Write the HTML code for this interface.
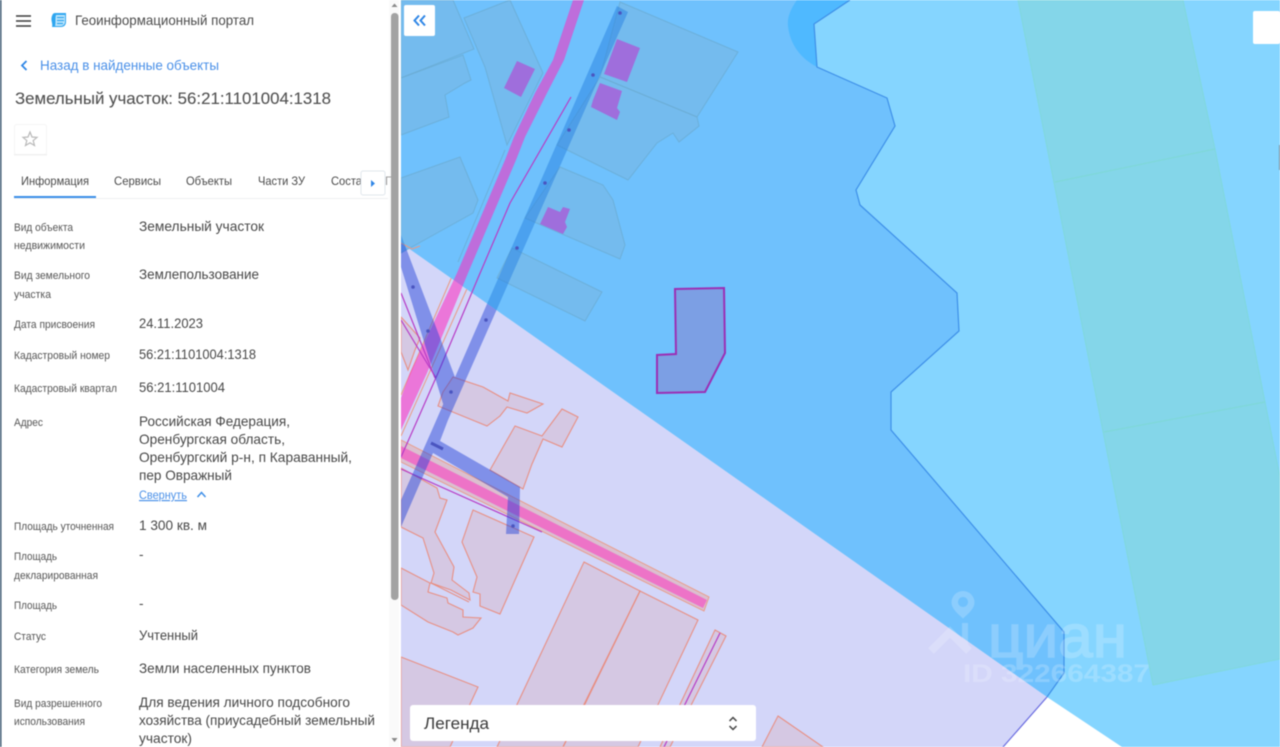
<!DOCTYPE html>
<html lang="ru"><head><meta charset="utf-8"><title>Геоинформационный портал</title>
<style>
html,body{margin:0;padding:0;width:1280px;height:747px;overflow:hidden;background:#fff}
svg{display:block;filter:blur(.4px)}
text{font-family:"Liberation Sans",sans-serif;fill:#4c4c4c}
.l{font-size:10.8px;fill:#555}
.v{font-size:13.6px;fill:#484848}
.t{font-size:11.8px;fill:#4a4a4a}
.par{fill:#74bbee;stroke:#6aa9cf;stroke-width:1;stroke-opacity:.7}
.b{fill:#9f6edc}
.s{fill:rgba(224,150,150,.22);stroke:#ea8878;stroke-width:1.1;stroke-opacity:.9}
.pk{fill:rgb(255,40,192);fill-opacity:.55}
.ln{fill:none;stroke:#b73cc6;stroke-width:1.2}
.o{fill:none;stroke:#ea9a84;stroke-width:1}
.d{fill:#4a55c0}
</style></head><body>
<svg width="1280" height="747" viewBox="0 0 1280 747" xmlns="http://www.w3.org/2000/svg">
<defs>
<clipPath id="zb"><polygon points="401,0 850,0 1064,632 1064,673 1047,697 401,243"/></clipPath>
<clipPath id="zl"><polygon points="401,243 1047,697 1003,747 401,747"/></clipPath>
</defs>
<!-- map base -->
<rect x="401" y="0" width="879" height="747" fill="#85d5ff"/>
<polygon points="1047,697 1122,747 1003,747" fill="#fff"/>
<!-- green strip -->
<polygon points="1018,0 1183,0 1215,149 1265,402 1280,477 1280,659 1153,685" fill="#84d6e9" stroke="#80d8dc" stroke-width="1"/>
<path d="M1055,182L1215,149M1104,432L1265,402" stroke="#7fd8d8" stroke-width="1.2" fill="none"/>
<!-- blue zone -->
<polygon points="401,0 850,0 814,24 817,67 887,98 895,126 856,190 860,205 957,293 959,331 891,392 891,430 1064,632 1064,673 1047,697 401,243" fill="#6fc1fd"/>
<path d="M797,0C790,10 787,18 788,26C790,44 800,58 817,67L814,24L850,0Z" fill="#4fb9ff"/>
<!-- lavender -->
<polygon points="401,243 1047,697 1003,747 401,747" fill="#d3d6f9"/>
<polyline points="850,0 814,24 817,67 887,98 895,126 856,190 860,205 957,293 959,331 891,392 891,430 1064,632 1064,673 1047,697" fill="none" stroke="#3d8fe8" stroke-width="1.2"/>
<line x1="1047" y1="697" x2="1003" y2="747" stroke="#6a6ce0" stroke-width="1.2"/>
<!-- grey parcels -->
<polygon class="par" points="620,2 738,52 697,117 600,77"/>
<polygon class="par" points="600,77 697,117 699,126 679,142 673,133 657,143 628,180 557,145"/>
<polygon class="par" points="560,167 603,185 613,200 625,245 620,259 525,218"/>
<polygon class="par" points="512,248 602,292 585,321 497,278"/>
<polygon class="par" points="464,18 510,0 543,73 507,145 485,67"/>
<polygon class="par" points="401,0 453,0 474,49 401,78"/>
<polygon class="par" points="463,55 471,80 465,83 445,95 449,117 401,135 401,78"/>
<polygon class="par" points="460,157 478,200 473,213 410,248 401,253 401,178"/>
<polygon class="b" points="617,39 640,48 627,82 604,74"/>
<polygon class="b" points="600,83 622,91 617,108 620,112 617,120 591,107 593,100"/>
<polygon class="b" points="517,61 535,69 521,97 504,88"/>
<polygon class="b" points="548,207 560,212 563,207 570,209 565,222 567,227 563,234 540,224"/>
<!-- salmon parcels -->
<polygon class="s" points="453,377 483,387 508,401 510,393 543,404 527,413 507,407 500,416 487,426 438,406 443,392"/>
<polygon class="s" points="515,426 542,436 562,409 578,417 562,447 543,439 532,464 523,489 490,470"/>
<polygon class="s" points="473,510 534,537 500,614 480,606 480,594 473,592 477,577 462,542"/>
<polygon class="s" points="401,468 437,488 440,498 447,500 435,532 454,567 452,580 469,593 470,600 451,590 431,583 434,573 423,538 401,527"/>
<polygon class="s" points="401,568 430,583 428,592 447,598 448,603 463,610 463,617 481,618 473,628 458,635 453,632 428,622 401,605"/>
<path class="s" d="M431,583L469,602" style="fill:none"/>
<polygon class="s" points="401,657 478,687 450,747 401,747"/>
<polygon class="s" points="584,562 640,591 585,704 563,747 497,747"/>
<polygon class="s" points="640,591 698,620 638,747 563,747"/>
<polygon class="s" points="715,630 726,636 670,747 660,747"/>
<polygon class="s" points="778,716 823,747 762,747"/>
<polygon class="s" points="401,317 420,338 415,350 408,370 401,352"/>
<path class="o" d="M401,243L412,249L420,246"/>
<!-- road side outlines -->
<path d="M401,395L453,274M401,436L470,282" fill="none" stroke="#ea9a84" stroke-width="1" clip-path="url(#zl)"/>
<path d="M505,150L458,262" fill="none" stroke="#6aa9cf" stroke-width="1" stroke-opacity=".7"/>
<polygon points="401,440 709,597 704,611 401,462" fill="rgba(236,150,130,.35)" stroke="#ea9a84" stroke-width=".9"/>
<!-- pink roads -->
<polygon class="pk" points="573,0 584,0 564,60 547,93 525,137 516,160 468,273 427,373 401,430 401,398 410,373 457,273 505,160 514,137 535,93 553,60"/>
<polygon class="pk" points="401,446 707,600 703,608 401,458" style="fill-opacity:.5"/>
<!-- purple lines -->
<polyline class="ln" points="571,97 510,203 478,278 438,373 413,430 401,457"/>
<polyline class="ln" points="401,293 435,378"/>
<polyline class="ln" points="401,320 436,378"/>
<polyline class="ln" points="401,469 542,532"/>
<line class="ln" x1="720" y1="633" x2="664" y2="747"/>
<!-- blue bars, per zone -->
<g clip-path="url(#zb)" fill="rgb(39,130,225)" fill-opacity=".5">
<path fill-rule="nonzero" d="M617,6L628,12L448,420L440,441L520,487L519,534L506,534L508,497L433,453L401,527L401,500L432,430ZM401,235L458,385L445,410L401,267Z"/>
</g>
<g clip-path="url(#zl)" fill="rgb(35,65,215)" fill-opacity=".47">
<path fill-rule="nonzero" d="M617,6L628,12L448,420L440,441L520,487L519,534L506,534L508,497L433,453L401,527L401,500L432,430ZM401,235L458,385L445,410L401,267Z"/>
</g>
<g class="d"><circle cx="620" cy="13" r="1.8"/><circle cx="593" cy="75" r="1.8"/><circle cx="569" cy="130" r="1.8"/><circle cx="545" cy="183" r="1.8"/><circle cx="517" cy="248" r="1.8"/><circle cx="486" cy="320" r="1.8"/><circle cx="413" cy="287" r="1.8"/><circle cx="428" cy="331" r="1.8"/><circle cx="513" cy="526" r="1.8"/><circle cx="451" cy="392" r="1.8"/></g>
<line x1="431" y1="443" x2="443" y2="449" stroke="#4a55c0" stroke-width="3"/>
<!-- target -->
<polygon points="675,289 724,288 725,353 705,392 657,393 657,355 676,354" fill="#7c9fe4" stroke="#9b2fb5" stroke-width="2"/>
<!-- watermark -->
<g opacity=".2">
<path fill="#fff" fill-rule="evenodd" d="M963,591a11.500,11.500 0 0 1 11.500,11.500c0,6 -6,11 -11.500,16c-5.500,-5 -11.500,-10 -11.500,-16a11.500,11.500 0 0 1 11.500,-11.500zM963,597a5,5 0 1 0 .01,0z"/>
<path fill="none" stroke="#fff" stroke-width="8" d="M931,651L950,632L969,651"/>
<rect x="962" y="623" width="6" height="24" fill="#fff"/>
<text x="988" y="657" font-size="60" textLength="139" lengthAdjust="spacingAndGlyphs" style="fill:#fff;stroke:#fff;stroke-width:1.5">циан</text>
<text x="963" y="682" font-size="25" font-weight="700" textLength="187" lengthAdjust="spacingAndGlyphs" style="fill:#fff">ID 322664387</text>
</g>
<!-- map controls -->
<rect x="404" y="5" width="31" height="31" rx="2" fill="#fff"/>
<path d="M419,15.500L414.500,20.500L419,25.500M425,15.500L420.500,20.500L425,25.500" fill="none" stroke="#2f86e6" stroke-width="2"/>
<rect x="1253" y="11" width="27" height="33" rx="2" fill="#fff"/>
<rect x="1279" y="145" width="1" height="25" fill="#6f8b9c"/>
<rect x="410" y="705" width="346" height="36" rx="3" fill="#fff"/>
<text x="424" y="729" font-size="17" textLength="65" lengthAdjust="spacingAndGlyphs" style="fill:#3a3a3a">Легенда</text>
<path d="M729.500,721L733,717.500L736.500,721M729.500,726L733,729.500L736.500,726" fill="none" stroke="#444" stroke-width="1.500"/>
<!-- panel -->
<rect x="0" y="0" width="401" height="747" fill="#fff"/>
<rect x="0" y="0" width="1.500" height="747" fill="#3e5a72"/>
<rect x="389" y="0" width="10" height="747" fill="#fafafa"/>
<rect x="391" y="13" width="7.500" height="587" rx="3.500" fill="#a3a3a3"/>
<path d="M391.500,7L394.500,3.500L397.500,7ZM391.500,738L394.500,742L397.500,738Z" fill="#8a8a8a"/>
<path d="M16,16H31M16,21H31M16,26H31" stroke="#3a3a3a" stroke-width="1.500"/>
<path d="M55,13H66V22C66,25 64,27 61,27H52C53,24 51,21 51.500,18C52,15 53,13 55,13Z" fill="#2ea6f0"/>
<path d="M56,15H65V22C65,24 63,26 61,26H55C56,23 55,19 56,15Z" fill="#bfe6fb"/>
<path d="M57,17.500H64M57,20.500H64M57,23.500H63" stroke="#2ea6f0" stroke-width="1.200"/>
<text x="75" y="25" font-size="13.600" textLength="179" lengthAdjust="spacingAndGlyphs">Геоинформационный портал</text>
<path d="M26.500,61L22,65.500L26.500,70" fill="none" stroke="#2f86e6" stroke-width="1.800"/>
<text x="40" y="70" font-size="13.600" textLength="179" lengthAdjust="spacingAndGlyphs" style="fill:#4a90e8">Назад в найденные объекты</text>
<text x="15" y="104" font-size="16.800" textLength="316" lengthAdjust="spacingAndGlyphs" style="fill:#505050;stroke:#505050;stroke-width:.08">Земельный участок: 56:21:1101004:1318</text>
<rect x="14" y="124" width="33" height="31" rx="2" fill="#fff"/>
<rect x="14.500" y="124.500" width="32" height="30" rx="2" fill="none" stroke="#f5f5f5"/>
<rect x="14" y="154" width="33" height="1.500" fill="#f0f0f0"/>
<polygon points="30,132 32,137 37,137.400 33.200,140.600 34.500,145.500 30,142.800 25.500,145.500 26.800,140.600 23,137.400 28,137" fill="none" stroke="#b9b9b9" stroke-width="1.200"/>
<text class="t" x="21" y="185" textLength="68" lengthAdjust="spacingAndGlyphs">Информация</text>
<text class="t" x="114" y="185" textLength="47" lengthAdjust="spacingAndGlyphs">Сервисы</text>
<text class="t" x="186" y="185" textLength="46" lengthAdjust="spacingAndGlyphs">Объекты</text>
<text class="t" x="258" y="185" textLength="47" lengthAdjust="spacingAndGlyphs">Части ЗУ</text>
<text class="t" x="331" y="185" textLength="31" lengthAdjust="spacingAndGlyphs">Соста</text>
<text class="t" x="385" y="185" style="fill:#999">Г</text>
<rect x="14" y="198" width="374" height="1" fill="#eef0f2"/>
<rect x="14" y="196" width="82" height="2" fill="#3a8ee8"/>
<rect x="361" y="171" width="24" height="24" rx="2" fill="#fff" stroke="#e0e6ec"/>
<polygon points="371,180 375,183.500 371,187" fill="#2f86e6"/>
<rect x="391" y="165" width="7.500" height="40" fill="#a3a3a3"/>
<!-- labels -->
<text class="l" x="14" y="231" textLength="59" lengthAdjust="spacingAndGlyphs">Вид объекта</text>
<text class="l" x="14" y="249" textLength="71" lengthAdjust="spacingAndGlyphs">недвижимости</text>
<text class="l" x="14" y="279" textLength="76" lengthAdjust="spacingAndGlyphs">Вид земельного</text>
<text class="l" x="14" y="298" textLength="37" lengthAdjust="spacingAndGlyphs">участка</text>
<text class="l" x="14" y="328" textLength="81" lengthAdjust="spacingAndGlyphs">Дата присвоения</text>
<text class="l" x="14" y="359" textLength="96" lengthAdjust="spacingAndGlyphs">Кадастровый номер</text>
<text class="l" x="14" y="392" textLength="103" lengthAdjust="spacingAndGlyphs">Кадастровый квартал</text>
<text class="l" x="14" y="426" textLength="29" lengthAdjust="spacingAndGlyphs">Адрес</text>
<text class="l" x="14" y="530" textLength="100" lengthAdjust="spacingAndGlyphs">Площадь уточненная</text>
<text class="l" x="14" y="560" textLength="43" lengthAdjust="spacingAndGlyphs">Площадь</text>
<text class="l" x="14" y="579" textLength="84" lengthAdjust="spacingAndGlyphs">декларированная</text>
<text class="l" x="14" y="609" textLength="43" lengthAdjust="spacingAndGlyphs">Площадь</text>
<text class="l" x="14" y="640" textLength="32" lengthAdjust="spacingAndGlyphs">Статус</text>
<text class="l" x="14" y="673" textLength="85" lengthAdjust="spacingAndGlyphs">Категория земель</text>
<text class="l" x="14" y="707" textLength="88" lengthAdjust="spacingAndGlyphs">Вид разрешенного</text>
<text class="l" x="14" y="725" textLength="71" lengthAdjust="spacingAndGlyphs">использования</text>
<!-- values -->
<text class="v" x="139" y="231" textLength="125" lengthAdjust="spacingAndGlyphs">Земельный участок</text>
<text class="v" x="139" y="279" textLength="120" lengthAdjust="spacingAndGlyphs">Землепользование</text>
<text class="v" x="139" y="328" textLength="64" lengthAdjust="spacingAndGlyphs">24.11.2023</text>
<text class="v" x="139" y="359" textLength="117" lengthAdjust="spacingAndGlyphs">56:21:1101004:1318</text>
<text class="v" x="139" y="392" textLength="86" lengthAdjust="spacingAndGlyphs">56:21:1101004</text>
<text class="v" x="139" y="426" textLength="151" lengthAdjust="spacingAndGlyphs">Российская Федерация,</text>
<text class="v" x="139" y="444" textLength="146" lengthAdjust="spacingAndGlyphs">Оренбургская область,</text>
<text class="v" x="139" y="462" textLength="213" lengthAdjust="spacingAndGlyphs">Оренбургский р-н, п Караванный,</text>
<text class="v" x="139" y="480" textLength="93" lengthAdjust="spacingAndGlyphs">пер Овражный</text>
<text x="139" y="499" font-size="11.800" textLength="48" lengthAdjust="spacingAndGlyphs" style="fill:#4a90e8;text-decoration:underline">Свернуть</text>
<path d="M197.500,497L201.500,492.500L205.500,497" fill="none" stroke="#3f8fe8" stroke-width="1.500"/>
<text class="v" x="139" y="530" textLength="68" lengthAdjust="spacingAndGlyphs">1 300 кв. м</text>
<text class="v" x="139" y="559">-</text>
<text class="v" x="139" y="608">-</text>
<text class="v" x="139" y="640" textLength="59" lengthAdjust="spacingAndGlyphs">Учтенный</text>
<text class="v" x="139" y="673" textLength="172" lengthAdjust="spacingAndGlyphs">Земли населенных пунктов</text>
<text class="v" x="139" y="707" textLength="211" lengthAdjust="spacingAndGlyphs">Для ведения личного подсобного</text>
<text class="v" x="139" y="725" textLength="236" lengthAdjust="spacingAndGlyphs">хозяйства (приусадебный земельный</text>
<text class="v" x="139" y="743" textLength="53" lengthAdjust="spacingAndGlyphs">участок)</text>
</svg>
</body></html>
